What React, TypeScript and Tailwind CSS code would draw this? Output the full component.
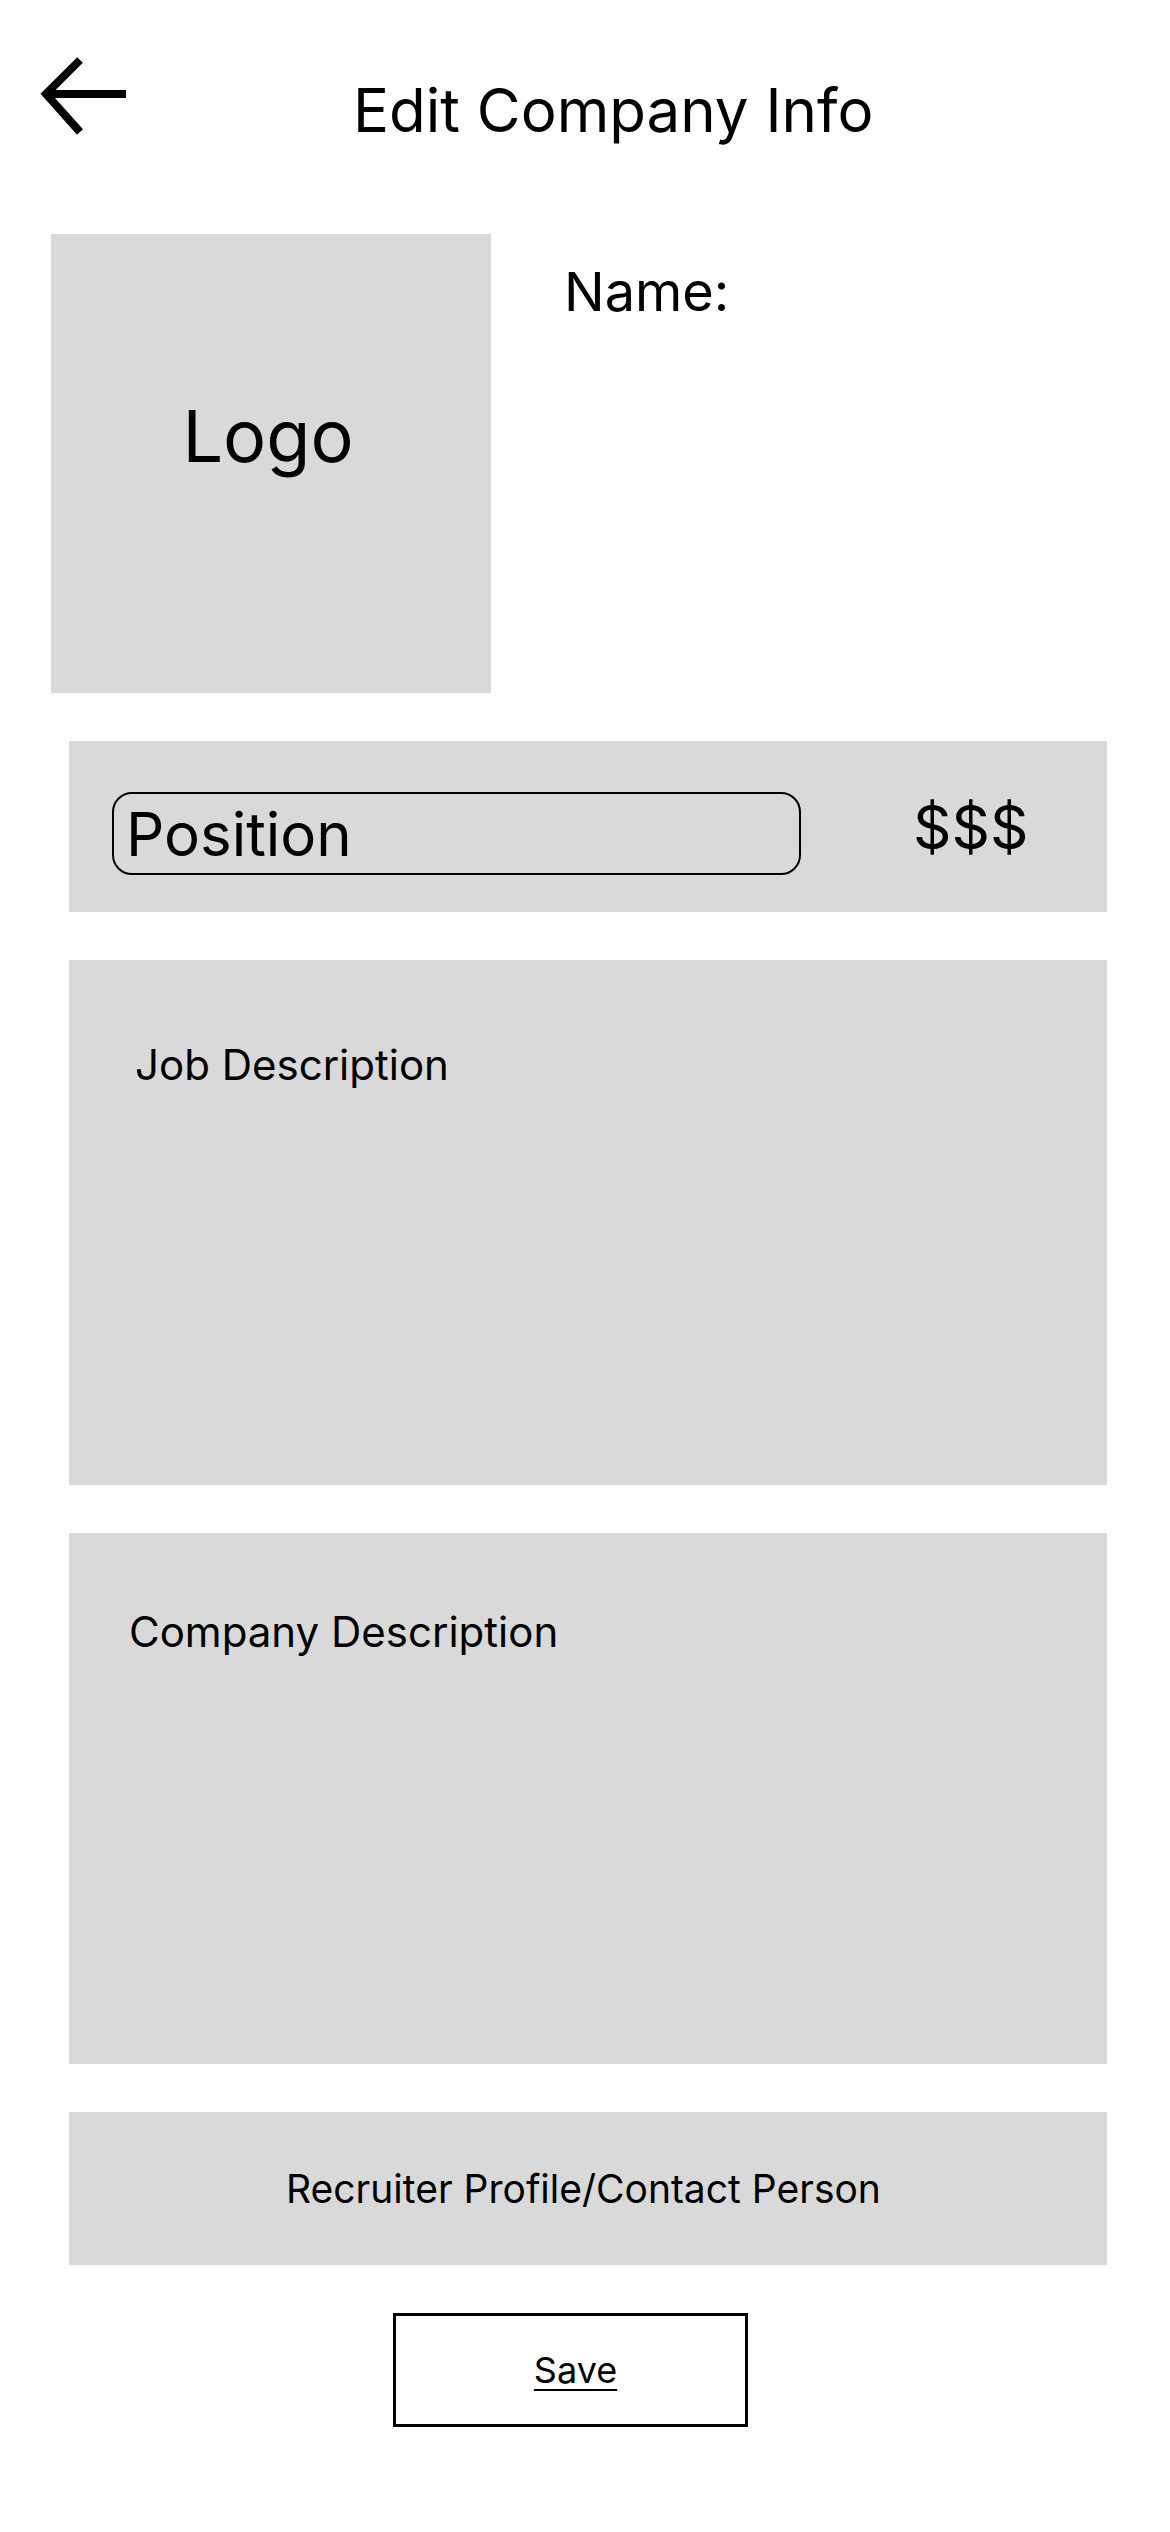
import React from "react";

function BackArrow() {
  return (
    <svg
      className="w-[90px] h-[84px] shrink-0"
      viewBox="40 54 90 84"
      fill="none"
      stroke="#000"
      strokeWidth={8}
    >
      <path d="M80 60 L46 94 L80 132" strokeLinejoin="miter" />
      <path d="M46 94 L126 94" />
    </svg>
  );
}

export default function App() {
  return (
    <div className="w-[1170px] min-h-[2532px] bg-white text-black font-['Inter',sans-serif]">
      {/* Header */}
      <div className="flex items-start h-[234px] pl-[40px] pt-[54px]">
        <BackArrow />
        <h1 className="ml-[223px] mt-[26px] text-[60px] leading-[60px] font-normal whitespace-nowrap">
          Edit Company Info
        </h1>
      </div>

      {/* Logo + Name */}
      <div className="flex items-start pl-[51px]">
        <div className="w-[440px] h-[459px] bg-[#d9d9d9] pt-[166px] pr-[6px] text-center">
          <span className="text-[72px] leading-[72px]">Logo</span>
        </div>
        <div className="ml-[73px] mt-[31px] text-[54px] leading-[54px]">Name:</div>
      </div>

      {/* Position row */}
      <div className="ml-[69px] mt-[48px] w-[1038px] h-[171px] bg-[#d9d9d9] flex items-start pl-[43px] pt-[51px]">
        <div className="w-[689px] h-[83px] border-2 border-black rounded-[20px] pl-[12px] pt-[10px]">
          <span className="text-[60px] leading-[60px]">Position</span>
        </div>
        <div className="ml-[112px] mt-[5px] text-[60px] leading-[60px]">$$$</div>
      </div>

      {/* Job Description */}
      <div className="ml-[69px] mt-[48px] w-[1038px] h-[525px] bg-[#d9d9d9] pl-[66px] pt-[84px]">
        <span className="text-[42px] leading-[42px]">Job Description</span>
      </div>

      {/* Company Description */}
      <div className="ml-[69px] mt-[48px] w-[1038px] h-[531px] bg-[#d9d9d9] pl-[60px] pt-[78px]">
        <span className="text-[42px] leading-[42px]">Company Description</span>
      </div>

      {/* Recruiter */}
      <div className="ml-[69px] mt-[48px] w-[1038px] h-[153px] bg-[#d9d9d9] flex items-center justify-center pr-[9px]">
        <span className="text-[39px] leading-[39px]">Recruiter Profile/Contact Person</span>
      </div>

      {/* Save */}
      <div className="ml-[393px] mt-[48px] w-[355px] h-[114px] border-[3px] border-black flex items-center justify-center pl-[10px]">
        <span className="text-[36px] leading-[36px] underline decoration-2 underline-offset-[6px]">Save</span>
      </div>
    </div>
  );
}
